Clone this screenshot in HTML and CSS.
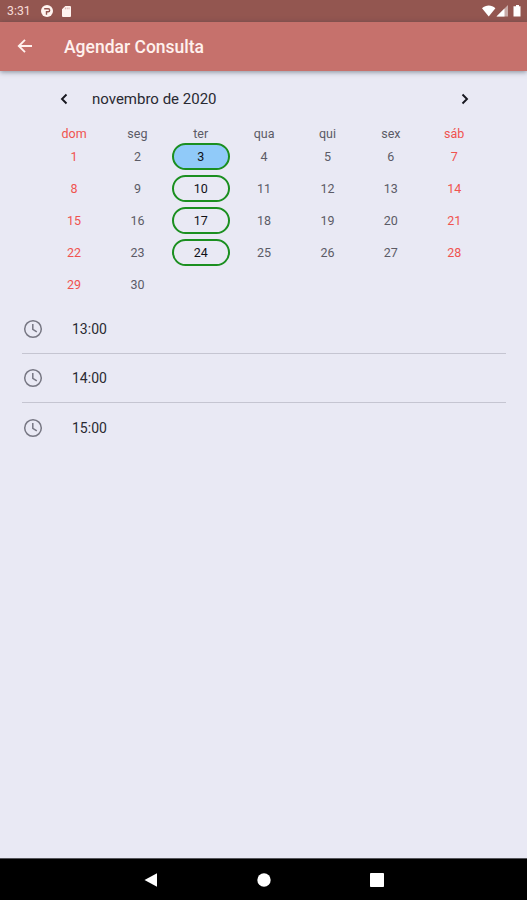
FILE: index.html
```html
<!DOCTYPE html>
<html lang="pt-BR">
<head>
<meta charset="utf-8">
<title>Agendar Consulta</title>
<link rel="stylesheet" href="styles.css">
</head>
<body>
<div class="screen">
  <div class="status">
    <span class="clock">3:31</span>
    <svg class="st-app" viewBox="0 0 12 12"><circle cx="6" cy="6" r="6" fill="#fff4f0"/><path d="M3.200 3.700H7.200a1.500 1.500 0 0 1 0 3H5.500V9.800" fill="none" stroke="#935650" stroke-width="1.400"/></svg>
    <svg class="st-card" viewBox="0 0 9 11"><path d="M3.3 0H8a1 1 0 0 1 1 1v9a1 1 0 0 1-1 1H1a1 1 0 0 1-1-1V3.3z" fill="#fff4f0"/><path d="M3.4 1.5v1.8M5.2 1.5v1.8M7 1.5v1.8" stroke="#c99a93" stroke-width=".7"/></svg>
    <svg class="st-right" viewBox="0 0 40 12"><path d="M0 3.2C4-.4 9.600-.4 13.400 3.200L6.700 11.500z" fill="#fff"/><path d="M14.500 11.500L26 0V11.500z" fill="#fff" opacity=".5"/><path d="M14.500 11.500L22.500 3.500V11.500z" fill="#fff"/><path d="M32.500 1.200H34V0h3v1.200h1.500V11.500h-7V1.200z" fill="#fff"/></svg>
  </div>
  <header class="bar">
    <svg class="back" viewBox="0 0 16 16"><path d="M15 8H2M8 1.800L1.800 8L8 14.200" fill="none" stroke="#fff1ee" stroke-width="1.900"/></svg>
    <h1>Agendar Consulta</h1>
  </header>
  <main>
    <div class="month">
      <svg class="chev" viewBox="0 0 8 12"><path d="M6.500 1.500L2 6l4.500 4.500" fill="none" stroke="#17171f" stroke-width="1.900"/></svg>
      <span class="month-name">novembro de 2020</span>
      <svg class="chev" viewBox="0 0 8 12"><path d="M1.500 1.500L6 6l-4.500 4.500" fill="none" stroke="#17171f" stroke-width="1.900"/></svg>
    </div>
    <div class="week names"><span class="red">dom</span><span>seg</span><span>ter</span><span>qua</span><span>qui</span><span>sex</span><span class="red">sáb</span></div>
    <div class="week"><span class="red">1</span><span>2</span><span class="open selected">3</span><span>4</span><span>5</span><span>6</span><span class="red">7</span></div>
    <div class="week"><span class="red">8</span><span>9</span><span class="open">10</span><span>11</span><span>12</span><span>13</span><span class="red">14</span></div>
    <div class="week"><span class="red">15</span><span>16</span><span class="open">17</span><span>18</span><span>19</span><span>20</span><span class="red">21</span></div>
    <div class="week"><span class="red">22</span><span>23</span><span class="open">24</span><span>25</span><span>26</span><span>27</span><span class="red">28</span></div>
    <div class="week"><span class="red">29</span><span>30</span></div>
    <ul class="times">
      <li><svg viewBox="0 0 20 20"><circle cx="10" cy="10" r="8.300"/><path d="M9.800 5v5.300l4 2.500"/></svg>13:00</li>
      <li><svg viewBox="0 0 20 20"><circle cx="10" cy="10" r="8.300"/><path d="M9.800 5v5.300l4 2.500"/></svg>14:00</li>
      <li><svg viewBox="0 0 20 20"><circle cx="10" cy="10" r="8.300"/><path d="M9.800 5v5.300l4 2.500"/></svg>15:00</li>
    </ul>
  </main>
  <nav>
    <svg viewBox="0 0 14 14"><path d="M.5 7L13 .2v13.600z"/></svg>
    <svg viewBox="0 0 14 14"><circle cx="7" cy="7" r="6.700"/></svg>
    <svg viewBox="0 0 14 14"><rect width="14" height="14" rx=".8"/></svg>
  </nav>
</div>
</body>
</html>
```
FILE: styles.css
```css
* { box-sizing: border-box; }
body { margin: 0; font-family: Roboto, "Liberation Sans", sans-serif; background: #e9e9f4; }
.screen { height: 900px; display: flex; flex-direction: column; overflow: hidden; }
.status { height: 22px; flex: none; background: #935650; display: flex; align-items: center; padding: 0 5px 0 7px; }
.clock { font-size: 12.3px; color: #f7dcd7; width: 34px; }
.st-app { width: 12px; height: 12px; }
.st-card { width: 9px; height: 11px; margin-left: 9px; }
.st-right { width: 40px; height: 12px; margin-left: auto; margin-bottom: 1px; }
.bar { height: 49px; flex: none; background: #c6716c; display: flex; align-items: center; padding: 0 17px 1px; box-shadow: 0 1px 5px rgba(45, 60, 75, .55); position: relative; }
.back { width: 16px; height: 16px; }
h1 { margin: 2px 0 0 31px; font-size: 17.5px; font-weight: 500; color: #fff1ee; line-height: 20px; }
main { flex: 1; }
.month { display: flex; align-items: center; height: 20px; margin: 18px 58.5px 0 60px; }
.chev { width: 8px; height: 12px; }
.month-name { flex: 1; margin-left: 24px; font-size: 15px; line-height: 20px; color: #292932; }
.week { display: grid; grid-template-columns: repeat(7, 1fr); width: 443.500px; height: 32px; margin-left: 42.4px; align-items: center; justify-items: center; font-size: 12.500px; color: #5b5b66; }
.week.names { height: 14px; margin: 17px 0 0 42.4px; }
.week .red { color: #f0534f; }
.open { width: 58px; height: 27px; border: 2px solid #1b8f20; border-radius: 14px; display: flex; align-items: center; justify-content: center; color: #111118; }
.selected { background: #90caf9; }
.times { list-style: none; margin: 4.4px 21px 0 22px; padding: 0; }
.times li { height: 49.300px; display: flex; align-items: center; font-size: 14px; color: #292932; border-bottom: 1.500px solid #c5c5d1; }
.times li:last-child { border-bottom: 0; }
.times svg { width: 20px; height: 20px; margin: 0 29px 0 1px; fill: none; stroke: #777783; stroke-width: 1.500; }
nav { height: 42px; flex: none; background: #000; border-top: 1px solid #55555a; display: grid; grid-template-columns: repeat(3, 113px); justify-content: center; justify-items: center; align-items: center; }
nav svg { width: 14px; height: 14px; fill: #fff; }
```
